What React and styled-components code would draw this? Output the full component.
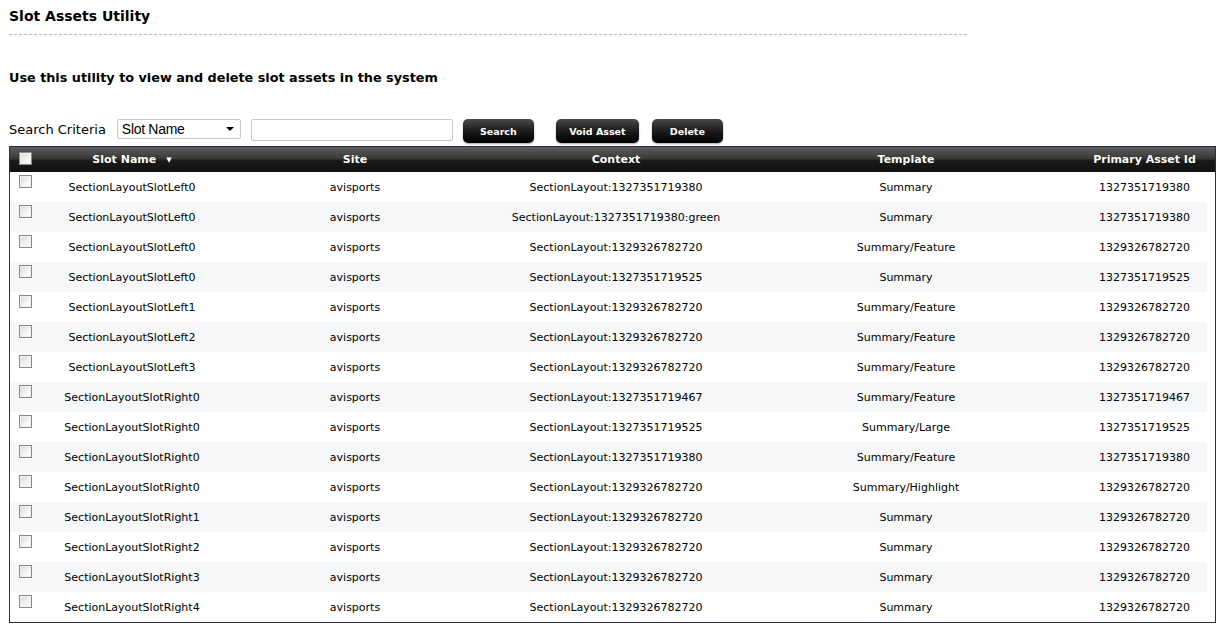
import styled, { createGlobalStyle } from 'styled-components'

const Global = createGlobalStyle`
  body {
    margin: 0;
    background: #fff;
    font-family: Verdana, "DejaVu Sans", sans-serif;
    color: #000;
  }
`

const Page = styled.div`
  padding: 7px 8px 0 9px;
`

const Title = styled.h1`
  margin: 0;
  font-size: 14px;
  font-weight: bold;
  line-height: 18px;
`

const Rule = styled.div`
  width: 958px;
  margin-top: 9px;
  border-top: 1px dashed #bdbdbd;
`

const Intro = styled.p`
  margin: 34px 0 0;
  font-size: 12.8px;
  font-weight: bold;
  line-height: 18px;
`

const Toolbar = styled.div`
  display: flex;
  align-items: center;
  margin-top: 32px;
  height: 24px;
`

const Label = styled.span`
  font-size: 13px;
  margin-right: 11px;
  margin-top: -4px;
`

const Select = styled.div`
  height: 18px;
  border: 1px solid #c8c8c8;
  border-radius: 2px;
  display: flex;
  align-items: center;
  justify-content: space-between;
  padding: 0 6px 0 4px;
  box-sizing: content-box;
  width: 112px;
  font-family: "Liberation Sans", Arial, sans-serif;
  font-size: 14px;
  letter-spacing: -0.3px;
  margin-top: -5px;
`

const Caret = styled.span`
  width: 0;
  height: 0;
  border-left: 4px solid transparent;
  border-right: 4px solid transparent;
  border-top: 4px solid #000;
`

const TextInput = styled.div`
  width: 200px;
  height: 20px;
  border: 1px solid #c8c8c8;
  border-radius: 2px;
  margin-left: 10px;
  margin-top: -3px;
`

const Button = styled.div`
  width: ${p => p.$w}px;
  height: 24px;
  margin-left: ${p => p.$gap}px;
  border-radius: 5px;
  background: linear-gradient(#4a4a4a 0%, #1c1c1c 50%, #000 100%);
  box-shadow: 0 1px 2px rgba(0, 0, 0, 0.35);
  color: #fff;
  font-size: 9.5px;
  font-weight: bold;
  display: flex;
  align-items: center;
  justify-content: center;
  box-sizing: border-box;
`

const Table = styled.div`
  margin-top: 3px;
  width: 1205px;
  border: 1px solid #2f2b50;
  border-top: none;
`

const cols = '30px 184px 262px 260px 320px 141px'

const HeadRow = styled.div`
  display: grid;
  grid-template-columns: ${cols} 8px;
  height: 26px;
  background: linear-gradient(#5c5c5c 0%, #3a3a3a 45%, #1a1a1a 55%, #111 100%);
  border-top: 1px solid #2f2b50;
  box-sizing: border-box;
  color: #fff;
  font-size: 11px;
  font-weight: bold;
`

const HeadCell = styled.div`
  display: flex;
  align-items: center;
  justify-content: center;
  padding-left: ${p => p.$pl || 0}px;
  text-shadow: 0 0 1px rgba(0, 0, 0, 0.6);
`

const Arrow = styled.span`
  margin-left: 10px;
  font-size: 7px;
`

const Body = styled.div`
  width: 1197px;
`

const Row = styled.div`
  display: grid;
  grid-template-columns: ${cols};
  height: 30px;
  background: ${p => (p.$alt ? '#f5f7f9' : '#fff')};
  font-size: 11px;
`

const Cell = styled.div`
  display: flex;
  align-items: center;
  justify-content: center;
  padding-left: ${p => p.$pl || 0}px;
  white-space: nowrap;
`

const BoxCell = styled.div`
  padding: ${p => p.$top}px 0 0 9px;
`

const Check = styled.span`
  display: block;
  width: 11px;
  height: 11px;
  border: 1px solid #8a8a8a;
  background: linear-gradient(135deg, #d6d6d6 0%, #f4f4f4 60%, #fff 100%);
  box-shadow: inset 0 0 0 1px #f0f0f0;
`

const rows = [
  ['SectionLayoutSlotLeft0', 'SectionLayout:1327351719380', 'Summary', '1327351719380'],
  ['SectionLayoutSlotLeft0', 'SectionLayout:1327351719380:green', 'Summary', '1327351719380'],
  ['SectionLayoutSlotLeft0', 'SectionLayout:1329326782720', 'Summary/Feature', '1329326782720'],
  ['SectionLayoutSlotLeft0', 'SectionLayout:1327351719525', 'Summary', '1327351719525'],
  ['SectionLayoutSlotLeft1', 'SectionLayout:1329326782720', 'Summary/Feature', '1329326782720'],
  ['SectionLayoutSlotLeft2', 'SectionLayout:1329326782720', 'Summary/Feature', '1329326782720'],
  ['SectionLayoutSlotLeft3', 'SectionLayout:1329326782720', 'Summary/Feature', '1329326782720'],
  ['SectionLayoutSlotRight0', 'SectionLayout:1327351719467', 'Summary/Feature', '1327351719467'],
  ['SectionLayoutSlotRight0', 'SectionLayout:1327351719525', 'Summary/Large', '1327351719525'],
  ['SectionLayoutSlotRight0', 'SectionLayout:1327351719380', 'Summary/Feature', '1327351719380'],
  ['SectionLayoutSlotRight0', 'SectionLayout:1329326782720', 'Summary/Highlight', '1329326782720'],
  ['SectionLayoutSlotRight1', 'SectionLayout:1329326782720', 'Summary', '1329326782720'],
  ['SectionLayoutSlotRight2', 'SectionLayout:1329326782720', 'Summary', '1329326782720'],
  ['SectionLayoutSlotRight3', 'SectionLayout:1329326782720', 'Summary', '1329326782720'],
  ['SectionLayoutSlotRight4', 'SectionLayout:1329326782720', 'Summary', '1329326782720'],
]

export default function App() {
  return (
    <Page>
      <Global />
      <Title>Slot Assets Utility</Title>
      <Rule />
      <Intro>Use this utility to view and delete slot assets in the system</Intro>
      <Toolbar>
        <Label>Search Criteria</Label>
        <Select>
          <span>Slot Name</span>
          <Caret />
        </Select>
        <TextInput />
        <Button $w={71} $gap={10}>Search</Button>
        <Button $w={83} $gap={22}>Void Asset</Button>
        <Button $w={71} $gap={13}>Delete</Button>
      </Toolbar>
      <Table>
        <HeadRow>
          <BoxCell $top={5}><Check /></BoxCell>
          <HeadCell>Slot Name<Arrow>▼</Arrow></HeadCell>
          <HeadCell>Site</HeadCell>
          <HeadCell>Context</HeadCell>
          <HeadCell>Template</HeadCell>
          <HeadCell $pl={16}>Primary Asset Id</HeadCell>
          <div />
        </HeadRow>
        <Body>
          {rows.map((r, i) => (
            <Row key={i} $alt={i % 2 === 1}>
              <BoxCell $top={3}><Check /></BoxCell>
              <Cell>{r[0]}</Cell>
              <Cell>avisports</Cell>
              <Cell>{r[1]}</Cell>
              <Cell>{r[2]}</Cell>
              <Cell $pl={16}>{r[3]}</Cell>
            </Row>
          ))}
        </Body>
      </Table>
    </Page>
  )
}
